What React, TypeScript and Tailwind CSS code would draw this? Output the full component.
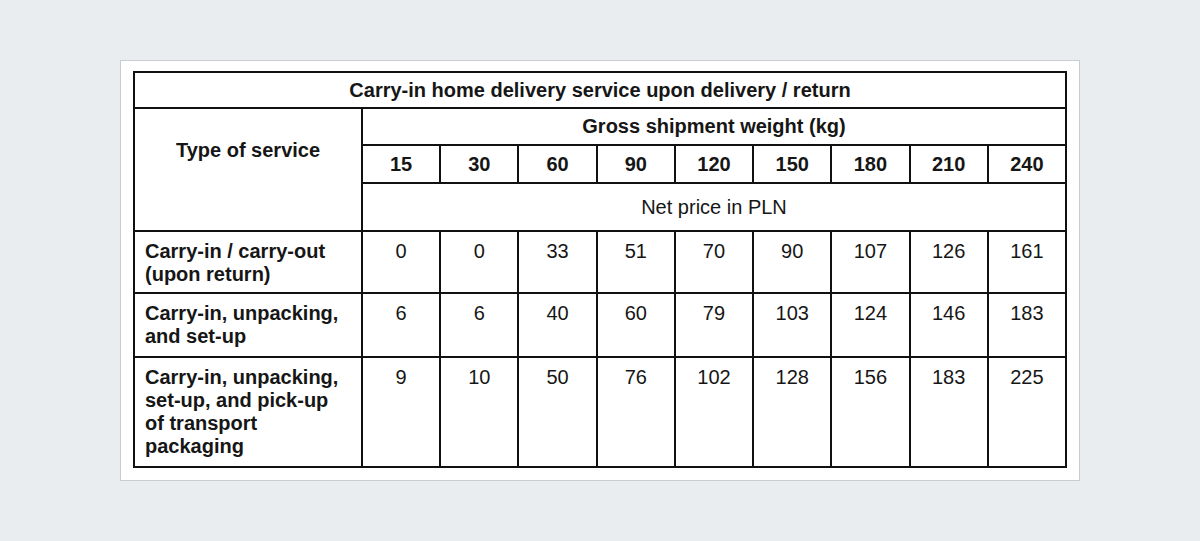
import React from "react";

const weights = [15, 30, 60, 90, 120, 150, 180, 210, 240];

const rows = [
  { label: ["Carry-in / carry-out", "(upon return)"], prices: [0, 0, 33, 51, 70, 90, 107, 126, 161] },
  { label: ["Carry-in, unpacking,", "and set-up"], prices: [6, 6, 40, 60, 79, 103, 124, 146, 183] },
  {
    label: ["Carry-in, unpacking,", "set-up, and pick-up", "of transport", "packaging"],
    prices: [9, 10, 50, 76, 102, 128, 156, 183, 225],
  },
];

export default function App() {
  return (
    <div
      className="min-h-[541px] w-full bg-[#e9edf0] flex justify-center pt-[60px] text-[#161616]"
      style={{ fontFamily: '"Liberation Sans", Arial, sans-serif' }}
    >
      <div className="w-[960px] h-[421px] bg-white border border-[#c9cdd1] px-3 pt-[10px] pb-[13px]">
        <div className="grid grid-cols-[226px_repeat(9,1fr)] grid-rows-[34px_35px_36px_46px_60px_62px_108px] gap-[2px] p-[2px] bg-[#111] text-[20px] leading-[23px]">
          <div className="col-span-10 bg-white flex items-center justify-center font-bold">
            Carry-in home delivery service upon delivery / return
          </div>

          <div className="row-span-3 bg-white flex justify-center pt-[30px] font-bold">Type of service</div>
          <div className="col-span-9 bg-white flex items-center justify-center font-bold">
            Gross shipment weight (kg)
          </div>
          {weights.map((w) => (
            <div key={w} className="bg-white flex items-center justify-center font-bold">
              {w}
            </div>
          ))}
          <div className="col-span-9 bg-white flex items-center justify-center">Net price in PLN</div>

          {rows.map((r, i) => (
            <React.Fragment key={i}>
              <div className="bg-white px-[10px] pt-[8px] font-bold">
                {r.label.map((l) => (
                  <div key={l}>{l}</div>
                ))}
              </div>
              {r.prices.map((p, j) => (
                <div key={j} className="bg-white text-center pt-[8px]">
                  {p}
                </div>
              ))}
            </React.Fragment>
          ))}
        </div>
      </div>
    </div>
  );
}
